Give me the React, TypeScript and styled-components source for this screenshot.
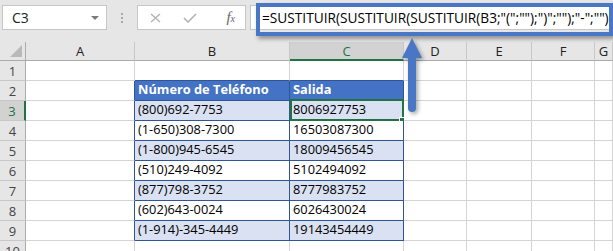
import React from 'react'
import styled, { createGlobalStyle } from 'styled-components'

const BLUE = '#2f5597'
const GRID = '#d4d4d4'
const GREEN = '#217346'
const ACCENT = '#4a76c6'

const GlobalStyle = createGlobalStyle`
	html, body {
		margin: 0;
		padding: 0;
		background: #fff;
		overflow: hidden;
	}
	body {
		font-family: 'Open Sans', 'Liberation Sans', sans-serif;
	}
`

const Window = styled.div`
	position: relative;
	width: 613px;
	height: 251px;
	overflow: hidden;
`

const Toolbar = styled.div`
	display: flex;
	align-items: flex-start;
	height: 42px;
	box-sizing: border-box;
	padding: 5px 0 0 2px;
	background: #e6e6e6;
`

const NameBox = styled.div`
	width: 105px;
	height: 25px;
	box-sizing: border-box;
	display: flex;
	align-items: center;
	justify-content: space-between;
	padding: 0 7px 0 9px;
	background: #fff;
	border: 1px solid #c6c6c6;
	font-size: 14px;
	color: #222;
`

const Caret = styled.span`
	width: 0;
	height: 0;
	border-left: 4px solid transparent;
	border-right: 4px solid transparent;
	border-top: 4px solid #7a7a7a;
`

const Grip = styled.div`
	width: 30px;
	height: 25px;
	display: flex;
	flex-direction: column;
	align-items: center;
	justify-content: center;
	gap: 2px;
	& > span {
		width: 2px;
		height: 2px;
		background: #a8a8a8;
	}
`

const FxBox = styled.div`
	width: 109px;
	height: 25px;
	box-sizing: border-box;
	display: flex;
	align-items: center;
	padding: 0 10px 0 12px;
	gap: 22px;
	background: #fff;
	border: 1px solid #c6c6c6;
`

const FxLabel = styled.span`
	margin-left: auto;
	font-family: 'Liberation Serif', serif;
	font-style: italic;
	font-size: 15px;
	color: #666;
	& > small {
		font-size: 10px;
	}
`

const FormulaInput = styled.div`
	flex: 1;
	margin-left: 4px;
	height: 25px;
	box-sizing: border-box;
	display: flex;
	align-items: center;
	padding-left: 11px;
	background: #fff;
	border: 1px solid #c6c6c6;
	border-right: none;
	font-size: 13.7px;
	color: #000;
	white-space: nowrap;
	overflow: hidden;
`

const Highlight = styled.div`
	position: absolute;
	left: 256px;
	top: 3px;
	width: 357px;
	height: 33px;
	box-sizing: border-box;
	border: 4px solid ${ACCENT};
	box-shadow: 2px 3px 4px rgba(0, 0, 0, 0.35);
	pointer-events: none;
`

const Arrow = styled.svg`
	position: absolute;
	left: 400px;
	top: 35px;
	filter: drop-shadow(2px 2px 2px rgba(0, 0, 0, 0.35));
`

const Sheet = styled.div`
	display: grid;
	grid-template-columns: 26px 109px 155px 114px 63px 65px 63px 1fr;
	grid-template-rows: 19px repeat(10, 20px);
`

const Corner = styled.div`
	position: relative;
	background: #e6e6e6;
	border-right: 1px solid #ababab;
	border-bottom: 1px solid #ababab;
	&::after {
		content: '';
		position: absolute;
		right: 3px;
		bottom: 3px;
		border-left: 12px solid transparent;
		border-bottom: 12px solid #b9b9b9;
	}
`

const ColHead = styled.div<{ $active?: boolean }>`
	display: flex;
	align-items: center;
	justify-content: center;
	box-sizing: border-box;
	background: ${p => (p.$active ? '#d2d2d2' : '#e6e6e6')};
	border-right: 1px solid #c8c8c8;
	border-bottom: ${p => (p.$active ? `2px solid ${GREEN}` : '1px solid #ababab')};
	font-size: 13px;
	color: ${p => (p.$active ? GREEN : '#222')};
`

const RowHead = styled.div<{ $active?: boolean }>`
	display: flex;
	align-items: center;
	justify-content: center;
	box-sizing: border-box;
	background: ${p => (p.$active ? '#d2d2d2' : '#e6e6e6')};
	border-right: ${p => (p.$active ? `2px solid ${GREEN}` : '1px solid #ababab')};
	border-bottom: 1px solid #c8c8c8;
	font-size: 13px;
	color: ${p => (p.$active ? GREEN : '#444')};
`

const Cell = styled.div<{ $fill: string; $right: string; $bottom: string; $head?: boolean; $selected?: boolean }>`
	position: relative;
	display: flex;
	align-items: flex-end;
	box-sizing: border-box;
	padding: 0 0 2px 3px;
	background: ${p => p.$fill};
	border-right: 1px solid ${p => p.$right};
	border-bottom: 1px solid ${p => p.$bottom};
	font-size: 12.8px;
	font-weight: ${p => (p.$head ? 700 : 400)};
	color: ${p => (p.$head ? '#fff' : '#000')};
	white-space: nowrap;
	${p =>
		p.$selected &&
		`
		&::before {
			content: '';
			position: absolute;
			left: 0;
			top: -2px;
			right: -1px;
			bottom: -1px;
			border: 2px solid ${GREEN};
		}
		&::after {
			content: '';
			position: absolute;
			right: -3px;
			bottom: -4px;
			width: 5px;
			height: 5px;
			background: ${GREEN};
			border: 1px solid #fff;
		}
	`}
`

const COLS = ['A', 'B', 'C', 'D', 'E', 'F', 'G']

const DATA: [string, string][] = [
	['Número de Teléfono', 'Salida'],
	['(800)692-7753', '8006927753'],
	['(1-650)308-7300', '16503087300'],
	['(1-800)945-6545', '18009456545'],
	['(510)249-4092', '5102494092'],
	['(877)798-3752', '8777983752'],
	['(602)643-0024', '6026430024'],
	['(1-914)-345-4449', '19143454449'],
]

const FORMULA = '=SUSTITUIR(SUSTITUIR(SUSTITUIR(B3;"(";"");")";"");"-";"")'

const inTable = (row: number, col: number) => row >= 2 && row <= 9 && (col === 1 || col === 2)

const renderCell = (row: number, col: number) => {
	const table = inTable(row, col)
	const fill = !table ? '#fff' : row === 2 ? '#4472c4' : row % 2 === 1 ? '#d9e1f2' : '#fff'
	const right = row >= 2 && row <= 9 && col <= 2 ? BLUE : GRID
	const bottom = row <= 9 && (col === 1 || col === 2) ? BLUE : GRID
	const text = table ? DATA[row - 2][col - 1] : ''
	return (
		<Cell
			key={`${COLS[col]}${row}`}
			$fill={fill}
			$right={right}
			$bottom={bottom}
			$head={table && row === 2}
			$selected={row === 3 && col === 2}
		>
			{text}
		</Cell>
	)
}

export default function App() {
	const rows = Array.from({ length: 10 }, (_, i) => i + 1)
	return (
		<Window>
			<GlobalStyle />
			<Toolbar>
				<NameBox>
					C3
					<Caret />
				</NameBox>
				<Grip>
					<span />
					<span />
					<span />
				</Grip>
				<FxBox>
					<svg width="11" height="10" viewBox="0 0 11 10">
						<path d="M1 1 L10 9 M10 1 L1 9" stroke="#b3b3b3" strokeWidth="1.4" fill="none" />
					</svg>
					<svg width="14" height="10" viewBox="0 0 14 10">
						<path d="M1 5 L5 9 L13 1" stroke="#b3b3b3" strokeWidth="1.6" fill="none" />
					</svg>
					<FxLabel>
						f<small>x</small>
					</FxLabel>
				</FxBox>
				<FormulaInput>{FORMULA}</FormulaInput>
			</Toolbar>
			<Sheet>
				<Corner />
				{COLS.map((c, i) => (
					<ColHead key={c} $active={i === 2}>
						{c}
					</ColHead>
				))}
				{rows.map(row => (
					<React.Fragment key={row}>
						<RowHead $active={row === 3}>{row}</RowHead>
						{COLS.map((_, col) => renderCell(row, col))}
					</React.Fragment>
				))}
			</Sheet>
			<Highlight />
			<Arrow width="26" height="82" viewBox="0 0 26 82">
				<path d="M12 3 L22 23 L2 23 Z" fill={ACCENT} />
				<rect x="8" y="20" width="8" height="57" rx="4" fill={ACCENT} />
				<rect x="8" y="20" width="8" height="6" fill={ACCENT} />
			</Arrow>
		</Window>
	)
}
